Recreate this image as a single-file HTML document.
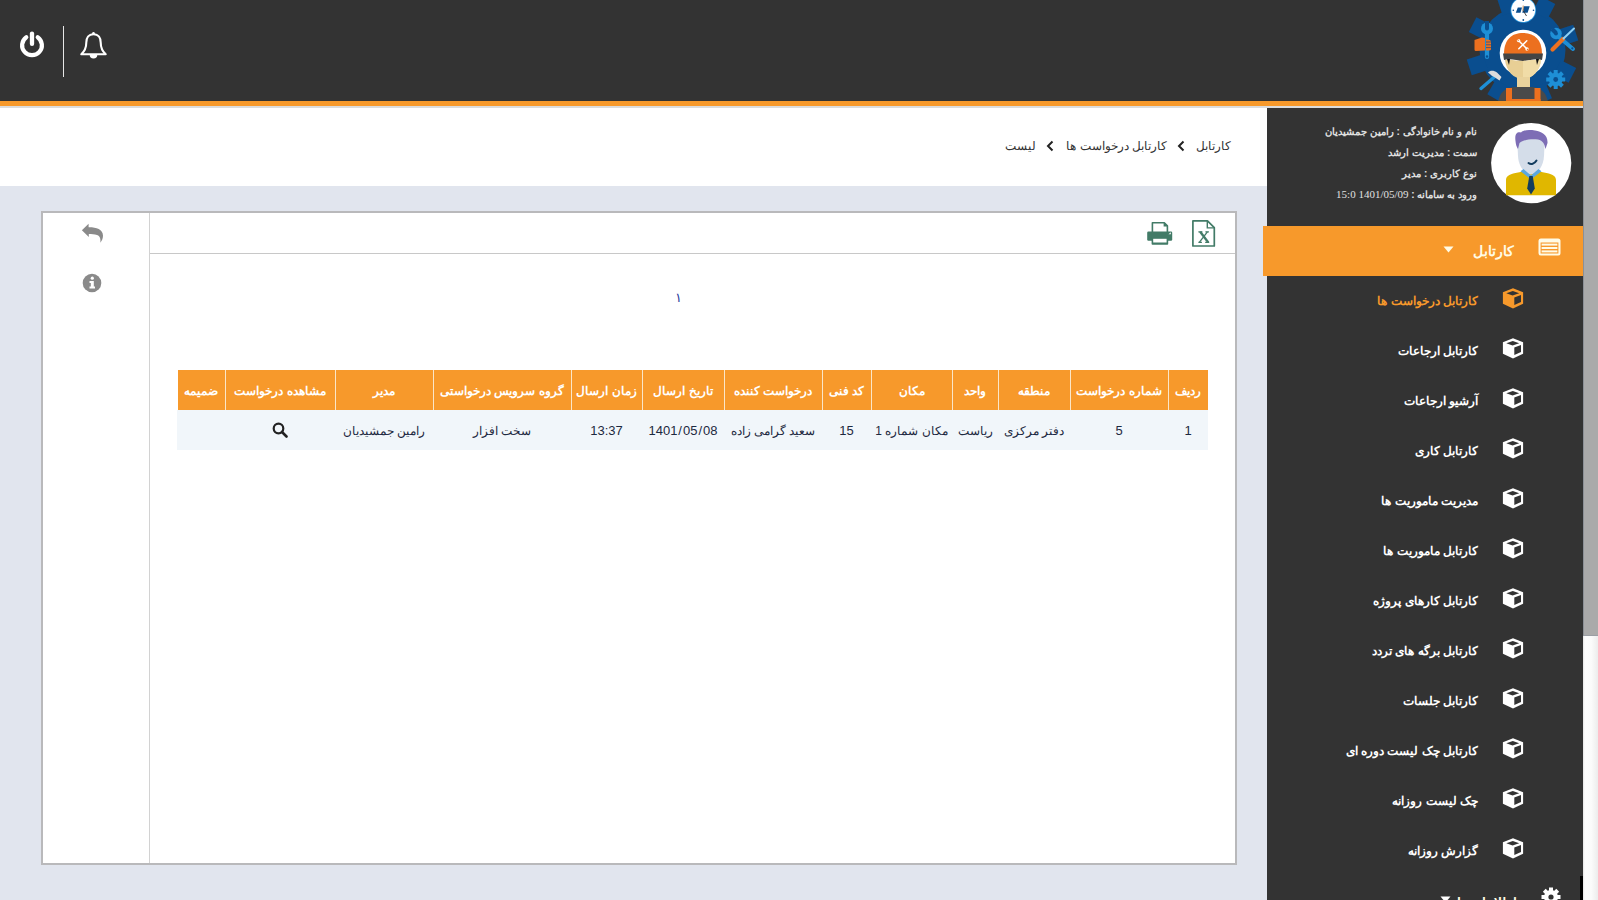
<!DOCTYPE html>
<html lang="fa">
<head>
<meta charset="utf-8">
<style>
*{box-sizing:border-box;margin:0;padding:0}
html,body{width:1598px;height:900px;overflow:hidden;background:#e1e5ee;font-family:"Liberation Sans",sans-serif}
.abs{position:absolute}
#topbar{position:absolute;left:0;top:0;width:1583px;height:102px;background:#333333}
#orange{position:absolute;left:0;top:101px;width:1583px;height:5px;background:#f7992b}
#grayline{position:absolute;left:0;top:106px;width:1583px;height:2px;background:#dcdcdc}
#whitehead{position:absolute;left:0;top:108px;width:1267px;height:78px;background:#ffffff}
#sidebar{position:absolute;left:1267px;top:108px;width:316px;height:792px;background:#333333}
#scroll{position:absolute;left:1583px;top:0;width:15px;height:900px;background:linear-gradient(to right,#e4e4e4 0,#fdfdfd 12%,#fbfbfb 55%,#ececec 100%)}
#thumb{position:absolute;left:1583px;top:0;width:15px;height:636px;background:#aaaaaa;border-left:1px solid #8c9096;border-bottom:1px solid #9a9ea4}
#box{position:absolute;left:41px;top:211px;width:1196px;height:654px;background:#fff;border:2px solid #b9b9bb}
#divv{position:absolute;left:149px;top:213px;width:1px;height:650px;background:#d2d2d2}
#divh{position:absolute;left:150px;top:253px;width:1085px;height:1px;background:#c8c8c8}
.th{top:371px;height:40px;line-height:40px;text-align:center;color:#fff;font-weight:bold;font-size:12px;white-space:nowrap;direction:rtl}
.td{top:411px;height:40px;line-height:40px;text-align:center;color:#1d2940;font-size:12px;white-space:nowrap;direction:rtl}
.crumb{direction:rtl;text-align:right;font-size:12px;color:#333;line-height:20px;white-space:nowrap}
.crumb .chev{display:inline-block;margin:0 8px;font-weight:bold;font-size:16px;color:#222}
.mitem{direction:rtl;text-align:right;font-size:12px;font-weight:bold;line-height:20px;white-space:nowrap}
.uinfo{left:1277px;width:200px;direction:rtl;text-align:right;font-size:10px;font-weight:bold;color:#e0e0e0;line-height:20px;white-space:nowrap}
.shead{direction:rtl;text-align:right;font-size:14px;font-weight:bold;color:#fffbe6;line-height:20px;white-space:nowrap}
.sl{display:inline-block;margin:0 1px}
.num{font-size:13px}
.ser{font-family:"Liberation Serif",serif;font-weight:normal;font-size:11px}
</style>
</head>
<body>
<div id="topbar"></div>

<div id="grayline"></div>
<div id="whitehead"></div>
<div id="sidebar"></div>
<div id="scroll"></div>
<div id="thumb"></div>
<div id="box"></div>
<div id="divv"></div>
<div id="divh"></div>
<div id="thead" class="abs" style="left:178px;top:370px;width:1030px;height:40px;background:#f7992b"></div>
<div id="trow" class="abs" style="left:177px;top:410px;width:1031px;height:40px;background:#f1f6fa"></div>
<div class="th abs" style="left:177px;width:48px">ضمیمه</div>
<div class="abs" style="left:225px;top:370px;width:1px;height:40px;background:#fbe6c8"></div>
<div class="th abs" style="left:225px;width:110px">مشاهده درخواست</div>
<div class="td abs" style="left:225px;width:110px"><svg width="16" height="16" viewBox="0 0 16 16" style="margin-top:11px"><circle cx="6.5" cy="6.5" r="4.8" fill="none" stroke="#222" stroke-width="2.2"/><line x1="10" y1="10" x2="14.5" y2="14.5" stroke="#222" stroke-width="2.6" stroke-linecap="round"/></svg></div>
<div class="abs" style="left:335px;top:370px;width:1px;height:40px;background:#fbe6c8"></div>
<div class="th abs" style="left:335px;width:98px">مدیر</div>
<div class="td abs" style="left:335px;width:98px">رامین جمشیدیان</div>
<div class="abs" style="left:433px;top:370px;width:1px;height:40px;background:#fbe6c8"></div>
<div class="th abs" style="left:433px;width:138px">گروه سرویس درخواستی</div>
<div class="td abs" style="left:433px;width:138px">سخت افزار</div>
<div class="abs" style="left:571px;top:370px;width:1px;height:40px;background:#fbe6c8"></div>
<div class="th abs" style="left:571px;width:71px">زمان ارسال</div>
<div class="td abs" style="left:571px;width:71px" ><span class="num">13:37</span></div>
<div class="abs" style="left:642px;top:370px;width:1px;height:40px;background:#fbe6c8"></div>
<div class="th abs" style="left:642px;width:82px">تاریخ ارسال</div>
<div class="td abs" style="left:642px;width:82px"><span class="num" dir="ltr" style="unicode-bidi:isolate">1401<span class="sl">/</span>05<span class="sl">/</span>08</span></div>
<div class="abs" style="left:724px;top:370px;width:1px;height:40px;background:#fbe6c8"></div>
<div class="th abs" style="left:724px;width:98px">درخواست کننده</div>
<div class="td abs" style="left:724px;width:98px">سعید گرامی زاده</div>
<div class="abs" style="left:822px;top:370px;width:1px;height:40px;background:#fbe6c8"></div>
<div class="th abs" style="left:822px;width:49px">کد فنی</div>
<div class="td abs" style="left:822px;width:49px" ><span class="num">15</span></div>
<div class="abs" style="left:871px;top:370px;width:1px;height:40px;background:#fbe6c8"></div>
<div class="th abs" style="left:871px;width:81px">مکان</div>
<div class="td abs" style="left:871px;width:81px">مکان شماره 1</div>
<div class="abs" style="left:952px;top:370px;width:1px;height:40px;background:#fbe6c8"></div>
<div class="th abs" style="left:952px;width:46px">واحد</div>
<div class="td abs" style="left:952px;width:46px">ریاست</div>
<div class="abs" style="left:998px;top:370px;width:1px;height:40px;background:#fbe6c8"></div>
<div class="th abs" style="left:998px;width:72px">منطقه</div>
<div class="td abs" style="left:998px;width:72px">دفتر مرکزی</div>
<div class="abs" style="left:1070px;top:370px;width:1px;height:40px;background:#fbe6c8"></div>
<div class="th abs" style="left:1070px;width:98px">شماره درخواست</div>
<div class="td abs" style="left:1070px;width:98px" ><span class="num">5</span></div>
<div class="abs" style="left:1168px;top:370px;width:1px;height:40px;background:#fbe6c8"></div>
<div class="th abs" style="left:1168px;width:40px">ردیف</div>
<div class="td abs" style="left:1168px;width:40px" ><span class="num">1</span></div>

<!-- logo -->
<svg class="abs" style="left:1460px;top:0px" width="123" height="102" viewBox="0 0 123 102">
<circle cx="62.5" cy="50" r="43" fill="#0a4e8f"/><path d="M42.6 15.5 L37.3 -0.7 L53.1 -5.8 L58.3 10.3 Z" fill="#0a4e8f"/><path d="M72.8 11.5 L80.5 -3.7 L95.3 3.9 L87.6 19.0 Z" fill="#0a4e8f"/><path d="M97.0 30.1 L113.2 24.8 L118.3 40.6 L102.2 45.8 Z" fill="#0a4e8f"/><path d="M101.0 60.3 L116.2 68.0 L108.6 82.8 L93.5 75.1 Z" fill="#0a4e8f"/><path d="M85.4 82.7 L92.0 98.3 L76.7 104.8 L70.1 89.1 Z" fill="#0a4e8f"/><path d="M50.2 87.9 L41.7 102.6 L27.3 94.3 L35.8 79.6 Z" fill="#0a4e8f"/><path d="M28.0 69.9 L11.8 75.2 L6.7 59.4 L22.8 54.2 Z" fill="#0a4e8f"/><path d="M24.0 39.7 L8.8 32.0 L16.4 17.2 L31.5 24.9 Z" fill="#0a4e8f"/>
<!-- clock -->
<circle cx="63.3" cy="10" r="12.8" fill="#2c9ae0"/>
<circle cx="63.3" cy="10" r="12" fill="#fff"/>
<g fill="#0a4e8f"><circle cx="63.3" cy="0.3" r="0.8"/><circle cx="63.3" cy="20" r="0.9"/><circle cx="53.3" cy="10.2" r="0.8"/><circle cx="73.5" cy="10.2" r="0.8"/></g>
<path d="M55.8 12.7 L57.8 7.5 L62 7.5 L60.5 12.7 Z M62.3 12.7 L63.8 6.2 L69.7 6.2 L67.6 12.7 Z" fill="#0a4e8f"/>
<path d="M63.2 5.5 L63 11" stroke="#d08a4a" stroke-width="0.9"/>
<path d="M63.5 11 L66.5 16" stroke="#333" stroke-width="0.9"/>
<!-- head circle -->
<circle cx="63" cy="53" r="23.3" fill="#fff"/>
<path d="M44 54 C44 39 52 33 63 33 C74 33 82 39 82 54 Z" fill="#ec701f"/>
<path d="M58.8 48.8 L66.8 40.8 M59 41 L67 49" stroke="#fff" stroke-width="1.5" stroke-linecap="round"/>
<circle cx="58.6" cy="40.6" r="1.7" fill="#fff"/><circle cx="67" cy="49" r="1.7" fill="#fff"/>
<path d="M57.4 39.4 L58.6 40.6" stroke="#ec701f" stroke-width="1.1"/><path d="M68.2 50.2 L67 49" stroke="#ec701f" stroke-width="1.1"/>
<path d="M43 53.5 L83 53.5 L82 60 C75 58 69 61 63 61 C57 61 51 58 44 60 Z" fill="#444"/>
<path d="M45 60 C46 71 54 79 63 79 C72 79 80 71 81 60 C75 59 69 61 63 61 C57 61 51 59 45 60 Z" fill="#e8cf95"/>
<path d="M63 61 C69 61 75 59 81 60 C80 71 72 79 63 79 Z" fill="#f1dca7"/>
<path d="M47 59 L49 65 L50 59 Z M79 59 L77 65 L76 59 Z" fill="#111"/>
<!-- neck/body -->
<rect x="57" y="77" width="13" height="12" fill="#e9d29c"/>
<path d="M38 102 C40 92 45 88 54 87 L72 87 C81 88 86 92 88 102 Z" fill="#4a4a4a"/>
<rect x="46" y="88" width="6" height="14" fill="#ec701f"/>
<rect x="74.5" y="88" width="6" height="14" fill="#ec701f"/>
<rect x="46" y="99" width="34.5" height="3" fill="#ec701f"/>
<!-- left wrench and hand -->
<path d="M27 57 L27 32" stroke="#1e8fd6" stroke-width="4.2" stroke-linecap="round"/>
<circle cx="27" cy="28.5" r="6" fill="#1e8fd6"/>
<path d="M25 21 L29 21 L29 28.5 L25 28.5 Z" fill="#0a4e8f"/>
<circle cx="27" cy="28.5" r="2" fill="#0a4e8f"/>
<circle cx="27" cy="56.5" r="1.2" fill="#0a4e8f"/>
<path d="M14.5 40 L22 37.5 L25 38 L25 50.5 L16 51 Q14.5 51 14.5 49.5 Z" fill="#ec701f"/>
<path d="M26 39.5 Q31 39.5 31 41.5 L31 49 Q31 51 26 50.5 Z" fill="#ec701f"/>
<path d="M26 42 L31 42 M26 44.8 L31 44.8 M26 47.6 L31 47.6" stroke="#0a4e8f" stroke-width="0.7"/>
<!-- right tools -->
<path d="M99 37 L113 49" stroke="#1e8fd6" stroke-width="4" stroke-linecap="round"/>
<circle cx="96" cy="33.5" r="5.8" fill="#1e8fd6"/>
<path d="M90.5 30.5 L93.5 27.5 L97.5 31.5 L94.5 34.5 Z" fill="#0a4e8f"/>
<circle cx="96" cy="33.5" r="1.9" fill="#0a4e8f"/>
<circle cx="112.3" cy="48.3" r="1.1" fill="#0a4e8f"/>
<path d="M92.5 49.5 L103 39" stroke="#ec701f" stroke-width="4.2" stroke-linecap="round"/>
<path d="M103.5 38.5 L114 28.5" stroke="#8fd0f5" stroke-width="2" stroke-linecap="round"/>
<!-- hammer -->
<path d="M21 88.5 L35.5 76" stroke="#1e8fd6" stroke-width="3.4" stroke-linecap="round"/>
<path d="M28 72.5 C30 70 34 70 37 72.5 L41.5 77 L39.5 80.5 L35 77.5 L31.5 75.5 C30.5 74.5 29.5 73.5 28 72.5 Z" fill="#dcdcdc"/>
<!-- small gear -->
<g fill="#1e8fd6">
<circle cx="95.7" cy="79.5" r="6.8"/>
<rect x="93.7" y="70" width="4" height="19"/>
<rect x="86.2" y="77.5" width="19" height="4"/>
<rect x="93.7" y="70" width="4" height="19" transform="rotate(45 95.7 79.5)"/>
<rect x="93.7" y="70" width="4" height="19" transform="rotate(-45 95.7 79.5)"/>
</g>
<circle cx="95.7" cy="79.5" r="2.4" fill="#0a4e8f"/>
</svg>
<div id="orange"></div>
<!-- top bar icons -->
<svg class="abs" style="left:18px;top:30px" width="28" height="29" viewBox="0 0 28 29">
 <path d="M8.3 7.2 A9.9 9.9 0 1 0 19.7 7.2" fill="none" stroke="#fff" stroke-width="4.2" stroke-linecap="round"/>
 <line x1="14" y1="3.6" x2="14" y2="13.9" stroke="#fff" stroke-width="4.3" stroke-linecap="round"/>
</svg>
<div class="abs" style="left:63px;top:26px;width:1px;height:51px;background:#e6e6e6"></div>
<svg class="abs" style="left:79px;top:31px" width="29" height="29" viewBox="0 0 29 29">
 <path d="M14.5 3.2 C9.5 3.2 7.3 7.2 7.3 11.5 C7.3 16.5 6.5 19.5 2.3 23.3 L26.7 23.3 C22.5 19.5 21.7 16.5 21.7 11.5 C21.7 7.2 19.5 3.2 14.5 3.2 Z" fill="none" stroke="#fff" stroke-width="2.1" stroke-linejoin="round"/>
 <circle cx="14.5" cy="2.3" r="1.3" fill="#fff"/>
 <path d="M10.7 23.8 A3.8 3.8 0 0 0 18.3 23.8 Z" fill="#fff"/>
</svg>
<!-- breadcrumb -->
<div class="abs crumb" style="left:1131px;top:136px;width:100px">کارتابل</div>
<svg class="abs" style="left:1177px;top:140px" width="8" height="12" viewBox="0 0 8 12"><path d="M6.5 1.5 L2 6 L6.5 10.5" fill="none" stroke="#222" stroke-width="2"/></svg>
<div class="abs crumb" style="left:967px;top:136px;width:200px">کارتابل درخواست ها</div>
<svg class="abs" style="left:1046px;top:140px" width="8" height="12" viewBox="0 0 8 12"><path d="M6.5 1.5 L2 6 L6.5 10.5" fill="none" stroke="#222" stroke-width="2"/></svg>
<div class="abs crumb" style="left:936px;top:136px;width:100px">لیست</div>
<!-- excel & print -->
<svg class="abs" style="left:1192px;top:220px" width="24" height="27" viewBox="0 0 24 27">
 <path d="M0.9 0.9 L15.5 0.9 L22.3 7.7 L22.3 26 L0.9 26 Z" fill="#fff" stroke="#427b67" stroke-width="1.7" stroke-linejoin="round"/>
 <path d="M15.3 0.9 L15.3 7.9 L22.3 7.9" fill="none" stroke="#427b67" stroke-width="1.4"/>
 <path d="M8.2 11.8 L16.2 22.4" stroke="#427b67" stroke-width="2.4"/>
 <path d="M15.4 11.8 L7.3 22.4" stroke="#427b67" stroke-width="1.3"/>
 <path d="M6.4 11.9 L10.4 11.9 M13.4 11.9 L16.9 11.9 M6.4 22.4 L9.9 22.4 M13.2 22.4 L17.2 22.4" stroke="#427b67" stroke-width="1.2"/>
</svg>
<svg class="abs" style="left:1146px;top:221px" width="28" height="25" viewBox="0 0 28 25">
 <path d="M6.4 12 L6.4 1.8 L18.3 1.8 L21.4 4.9 L21.4 12" fill="#fff" stroke="#427b67" stroke-width="1.6" stroke-linejoin="round"/>
 <path d="M17.6 1 L22.2 5.6 L17.6 5.6 Z" fill="#427b67"/>
 <rect x="1.2" y="10.6" width="25" height="9.2" rx="1.2" fill="#427b67"/>
 <rect x="5.6" y="16" width="16.6" height="7.8" rx="0.8" fill="#427b67"/>
 <rect x="7.2" y="17.8" width="13.4" height="3.7" fill="#fff"/>
 <path d="M22.5 13.2 L24.8 11.2 L24.8 13.2 Z" fill="#fff"/>
</svg>
<!-- reply & info -->
<svg class="abs" style="left:81px;top:222px" width="23" height="22" viewBox="0 0 23 22">
 <path d="M0.9 8.3 L7.6 1.8 L7.6 5.3 C15 5.2 22 7 22 13.8 C22 16.3 21 18.8 19.3 20.7 C19.8 18 19.5 14.3 16 13 C13.5 12.1 10.5 12 7.8 12 L7.8 15 Z" fill="#8a8a8a"/>
</svg>
<svg class="abs" style="left:82px;top:273px" width="20" height="20" viewBox="0 0 20 20">
 <circle cx="10" cy="10" r="9.3" fill="#8a8a8a"/>
 <circle cx="10.3" cy="5.2" r="1.6" fill="#fff"/>
 <path d="M7.5 8 L11.8 8 L11.8 13.6 L13 13.6 L13 15.6 L7.5 15.6 L7.5 13.6 L8.8 13.6 L8.8 10 L7.5 10 Z" fill="#fff"/>
</svg>
<!-- pagination -->
<div class="abs" style="left:660px;top:288px;width:36px;text-align:center;color:#2c3e9e;font-size:13px;line-height:20px">&#1777;</div>


<!-- sidebar profile -->
<svg class="abs" style="left:1490px;top:122px" width="82" height="82" viewBox="0 0 82 82">
 <circle cx="41.2" cy="41.1" r="40.1" fill="#fff"/>
 <path d="M16 73.2 L16 58 C16 53.5 21 51.5 28 50.5 L33 49.5 L49 49.5 L54 50.5 C61 51.5 66 53.5 66 58 L66 73.2 Z" fill="#e0b700"/>
 <path d="M27.5 24 C27.5 18 33 16 41 16 C49 16 54.5 18 54.5 24 L54 34 C53.5 44 48 51.5 41 52.5 C34 51.5 28.5 44 28 34 Z" fill="#d4dde9"/>
 <path d="M30.5 49.3 L41 57.5 L51.5 49.3 L48.5 47 L41 53.5 L33.5 47 Z" fill="#5aa7e0"/>
 <path d="M39.3 54 L42.7 54 L44.8 66.5 L41 72.5 L37.2 66.5 Z" fill="#123c5e"/>
 <path d="M25.5 19 C24.5 12 27 9.5 31 10.5 C34 7.5 40 8 45 8.5 C52 9.5 58 13 57.5 21 L55.5 27 C54.5 22 53 18.5 48 17.5 C41 16.5 33 18 29.5 21 L28 27 C26.5 25 25.8 22 25.5 19 Z" fill="#7d6db5"/>
 <path d="M38.5 41 C41 43 44.5 42 46.5 38.5" fill="none" stroke="#123c5e" stroke-width="2" stroke-linecap="round"/>
</svg>
<div class="abs uinfo" style="top:122px">نام و نام خانوادگی : رامین جمشیدیان</div>
<div class="abs uinfo" style="top:143px">سمت : مدیریت ارشد</div>
<div class="abs uinfo" style="top:164px">نوع کاربری : مدیر</div>
<div class="abs uinfo" style="top:184px">ورود به سامانه : <span class="ser">1401/05/09 15:0</span></div>
<!-- orange section header -->
<div class="abs" style="left:1263px;top:226px;width:320px;height:50px;background:#f7992b"></div>
<svg class="abs" style="left:1538px;top:238px" width="23" height="18" viewBox="0 0 23 18">
 <rect x="0.5" y="0.5" width="22" height="17" rx="2.5" fill="#fffbe6"/>
 <rect x="2.6" y="4.5" width="17.8" height="11" fill="#f7992b"/>
 <rect x="3.6" y="5.6" width="15.8" height="2" fill="#fffbe6"/>
 <rect x="3.6" y="9" width="15.8" height="2" fill="#fffbe6"/>
 <rect x="3.6" y="12.4" width="15.8" height="2" fill="#fffbe6"/>
</svg>
<div class="abs shead" style="left:1314px;top:241px;width:200px">کارتابل</div>
<svg class="abs" style="left:1443px;top:246px" width="11" height="7" viewBox="0 0 11 7"><path d="M0.5 0.5 L10.5 0.5 L5.5 6.5 Z" fill="#fffbe6"/></svg>
<!-- bottom section header -->
<svg class="abs" style="left:1541px;top:887px" width="20" height="20" viewBox="0 0 20 20">
 <g fill="#fff"><circle cx="10" cy="10" r="7"/>
 <rect x="8" y="0.5" width="4" height="19"/><rect x="0.5" y="8" width="19" height="4"/>
 <rect x="8" y="0.5" width="4" height="19" transform="rotate(45 10 10)"/><rect x="8" y="0.5" width="4" height="19" transform="rotate(-45 10 10)"/></g>
 <circle cx="10" cy="10" r="2.6" fill="#333"/>
</svg>
<div class="abs shead" style="left:1317px;top:893px;width:200px">اطلاعات پایه</div>
<svg class="abs" style="left:1440px;top:896px" width="11" height="7" viewBox="0 0 11 7"><path d="M0.5 0.5 L10.5 0.5 L5.5 6.5 Z" fill="#fff"/></svg>
<div class="abs" style="left:1580px;top:876px;width:3px;height:24px;background:#000"></div>
<svg class="abs" style="left:1502px;top:288px" width="22" height="21" viewBox="0 0 22 21"><path d="M11 0.3 L21.1 4.3 L21.1 15.8 L11 20.5 L0.9 15.8 L0.9 4.3 Z" fill="#f7992b"/><path d="M10.8 2.9 L17.2 5.2 L10.6 7.6 L4.3 5.2 Z" fill="#333"/><path d="M12.3 9.4 L19 7 L19 13.9 L12.3 17.1 Z" fill="#333"/></svg>
<div class="abs mitem" style="left:1278px;top:291px;width:200px;color:#f7992b">کارتابل درخواست ها</div>
<svg class="abs" style="left:1502px;top:338px" width="22" height="21" viewBox="0 0 22 21"><path d="M11 0.3 L21.1 4.3 L21.1 15.8 L11 20.5 L0.9 15.8 L0.9 4.3 Z" fill="#ffffff"/><path d="M10.8 2.9 L17.2 5.2 L10.6 7.6 L4.3 5.2 Z" fill="#333"/><path d="M12.3 9.4 L19 7 L19 13.9 L12.3 17.1 Z" fill="#333"/></svg>
<div class="abs mitem" style="left:1278px;top:341px;width:200px;color:#ffffff">کارتابل ارجاعات</div>
<svg class="abs" style="left:1502px;top:388px" width="22" height="21" viewBox="0 0 22 21"><path d="M11 0.3 L21.1 4.3 L21.1 15.8 L11 20.5 L0.9 15.8 L0.9 4.3 Z" fill="#ffffff"/><path d="M10.8 2.9 L17.2 5.2 L10.6 7.6 L4.3 5.2 Z" fill="#333"/><path d="M12.3 9.4 L19 7 L19 13.9 L12.3 17.1 Z" fill="#333"/></svg>
<div class="abs mitem" style="left:1278px;top:391px;width:200px;color:#ffffff">آرشیو ارجاعات</div>
<svg class="abs" style="left:1502px;top:438px" width="22" height="21" viewBox="0 0 22 21"><path d="M11 0.3 L21.1 4.3 L21.1 15.8 L11 20.5 L0.9 15.8 L0.9 4.3 Z" fill="#ffffff"/><path d="M10.8 2.9 L17.2 5.2 L10.6 7.6 L4.3 5.2 Z" fill="#333"/><path d="M12.3 9.4 L19 7 L19 13.9 L12.3 17.1 Z" fill="#333"/></svg>
<div class="abs mitem" style="left:1278px;top:441px;width:200px;color:#ffffff">کارتابل کاری</div>
<svg class="abs" style="left:1502px;top:488px" width="22" height="21" viewBox="0 0 22 21"><path d="M11 0.3 L21.1 4.3 L21.1 15.8 L11 20.5 L0.9 15.8 L0.9 4.3 Z" fill="#ffffff"/><path d="M10.8 2.9 L17.2 5.2 L10.6 7.6 L4.3 5.2 Z" fill="#333"/><path d="M12.3 9.4 L19 7 L19 13.9 L12.3 17.1 Z" fill="#333"/></svg>
<div class="abs mitem" style="left:1278px;top:491px;width:200px;color:#ffffff">مدیریت ماموریت ها</div>
<svg class="abs" style="left:1502px;top:538px" width="22" height="21" viewBox="0 0 22 21"><path d="M11 0.3 L21.1 4.3 L21.1 15.8 L11 20.5 L0.9 15.8 L0.9 4.3 Z" fill="#ffffff"/><path d="M10.8 2.9 L17.2 5.2 L10.6 7.6 L4.3 5.2 Z" fill="#333"/><path d="M12.3 9.4 L19 7 L19 13.9 L12.3 17.1 Z" fill="#333"/></svg>
<div class="abs mitem" style="left:1278px;top:541px;width:200px;color:#ffffff">کارتابل ماموریت ها</div>
<svg class="abs" style="left:1502px;top:588px" width="22" height="21" viewBox="0 0 22 21"><path d="M11 0.3 L21.1 4.3 L21.1 15.8 L11 20.5 L0.9 15.8 L0.9 4.3 Z" fill="#ffffff"/><path d="M10.8 2.9 L17.2 5.2 L10.6 7.6 L4.3 5.2 Z" fill="#333"/><path d="M12.3 9.4 L19 7 L19 13.9 L12.3 17.1 Z" fill="#333"/></svg>
<div class="abs mitem" style="left:1278px;top:591px;width:200px;color:#ffffff">کارتابل کارهای پروژه</div>
<svg class="abs" style="left:1502px;top:638px" width="22" height="21" viewBox="0 0 22 21"><path d="M11 0.3 L21.1 4.3 L21.1 15.8 L11 20.5 L0.9 15.8 L0.9 4.3 Z" fill="#ffffff"/><path d="M10.8 2.9 L17.2 5.2 L10.6 7.6 L4.3 5.2 Z" fill="#333"/><path d="M12.3 9.4 L19 7 L19 13.9 L12.3 17.1 Z" fill="#333"/></svg>
<div class="abs mitem" style="left:1278px;top:641px;width:200px;color:#ffffff">کارتابل برگه های تردد</div>
<svg class="abs" style="left:1502px;top:688px" width="22" height="21" viewBox="0 0 22 21"><path d="M11 0.3 L21.1 4.3 L21.1 15.8 L11 20.5 L0.9 15.8 L0.9 4.3 Z" fill="#ffffff"/><path d="M10.8 2.9 L17.2 5.2 L10.6 7.6 L4.3 5.2 Z" fill="#333"/><path d="M12.3 9.4 L19 7 L19 13.9 L12.3 17.1 Z" fill="#333"/></svg>
<div class="abs mitem" style="left:1278px;top:691px;width:200px;color:#ffffff">کارتابل جلسات</div>
<svg class="abs" style="left:1502px;top:738px" width="22" height="21" viewBox="0 0 22 21"><path d="M11 0.3 L21.1 4.3 L21.1 15.8 L11 20.5 L0.9 15.8 L0.9 4.3 Z" fill="#ffffff"/><path d="M10.8 2.9 L17.2 5.2 L10.6 7.6 L4.3 5.2 Z" fill="#333"/><path d="M12.3 9.4 L19 7 L19 13.9 L12.3 17.1 Z" fill="#333"/></svg>
<div class="abs mitem" style="left:1278px;top:741px;width:200px;color:#ffffff">کارتابل چک لیست دوره ای</div>
<svg class="abs" style="left:1502px;top:788px" width="22" height="21" viewBox="0 0 22 21"><path d="M11 0.3 L21.1 4.3 L21.1 15.8 L11 20.5 L0.9 15.8 L0.9 4.3 Z" fill="#ffffff"/><path d="M10.8 2.9 L17.2 5.2 L10.6 7.6 L4.3 5.2 Z" fill="#333"/><path d="M12.3 9.4 L19 7 L19 13.9 L12.3 17.1 Z" fill="#333"/></svg>
<div class="abs mitem" style="left:1278px;top:791px;width:200px;color:#ffffff">چک لیست روزانه</div>
<svg class="abs" style="left:1502px;top:838px" width="22" height="21" viewBox="0 0 22 21"><path d="M11 0.3 L21.1 4.3 L21.1 15.8 L11 20.5 L0.9 15.8 L0.9 4.3 Z" fill="#ffffff"/><path d="M10.8 2.9 L17.2 5.2 L10.6 7.6 L4.3 5.2 Z" fill="#333"/><path d="M12.3 9.4 L19 7 L19 13.9 L12.3 17.1 Z" fill="#333"/></svg>
<div class="abs mitem" style="left:1278px;top:841px;width:200px;color:#ffffff">گزارش روزانه</div>
</body>
</html>
